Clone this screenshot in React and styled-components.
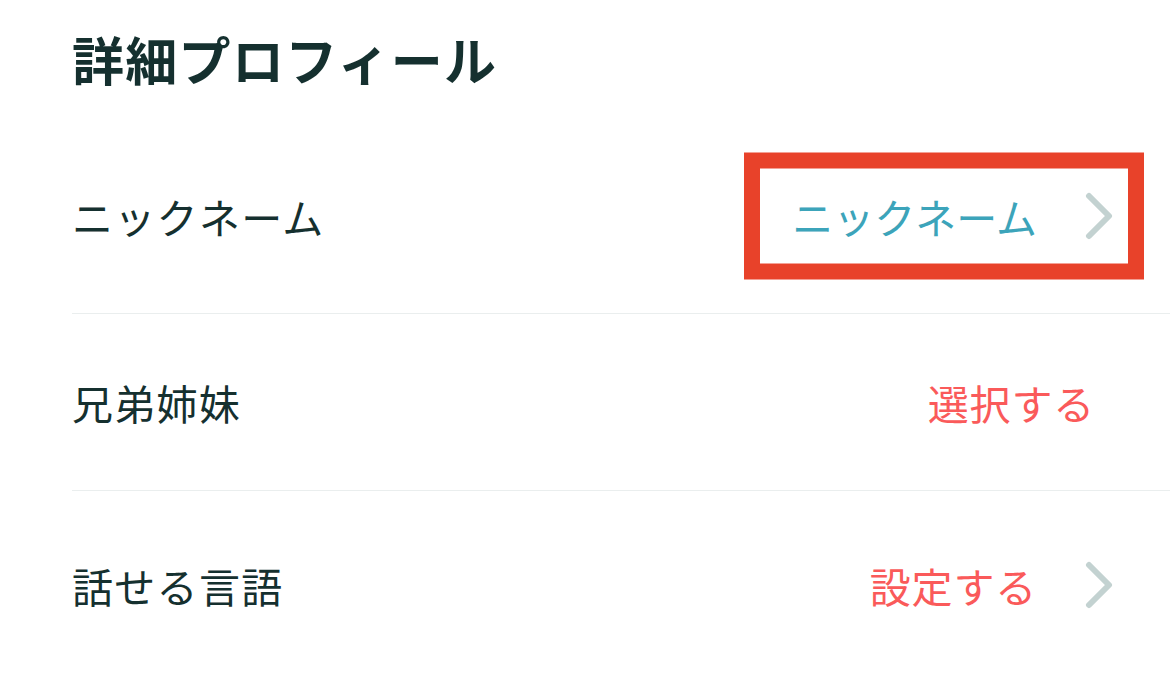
import styled, { createGlobalStyle } from "styled-components";

const COLORS = {
  text: "#15302f",
  value: "#3ca4ba",
  accent: "#fa5a5a",
  chevron: "#c3d2d1",
  divider: "#eaeeee",
  highlight: "#e8422a",
};

const ROWS = [
  { label: "ニックネーム", value: "ニックネーム", tone: "filled", chevron: true, highlight: true, height: 195 },
  { label: "兄弟姉妹", value: "選択する", tone: "empty", chevron: false, height: 177, endGap: 18 },
  { label: "話せる言語", value: "設定する", tone: "empty", chevron: true, height: 188, last: true },
];

export default function App() {
  return (
    <>
      <GlobalStyle />
      <Page>
        <Title>詳細プロフィール</Title>
        <List>
          {ROWS.map((row) => (
            <Row key={row.label} $height={row.height} $last={row.last}>
              <Label>{row.label}</Label>
              <ValueGroup $highlight={row.highlight} $endGap={row.endGap}>
                <Value $tone={row.tone}>{row.value}</Value>
                {row.chevron && <Chevron />}
              </ValueGroup>
            </Row>
          ))}
        </List>
      </Page>
    </>
  );
}

function Chevron() {
  return (
    <ChevronIcon viewBox="0 0 28 48" aria-hidden="true">
      <polyline points="4,4 24,24 4,44" />
    </ChevronIcon>
  );
}

const GlobalStyle = createGlobalStyle`
  html, body {
    margin: 0;
    background: #ffffff;
  }
  body {
    font-family: "Noto Sans CJK JP", "Noto Sans", sans-serif;
    color: ${COLORS.text};
  }
`;

const Page = styled.div`
  width: 1170px;
  height: 685px;
  overflow: hidden;
  background: #ffffff;
`;

const Title = styled.h1`
  margin: 0;
  padding: 33px 0 34px 72px;
  font-size: 52px;
  line-height: 52px;
  font-weight: 700;
  letter-spacing: 1.3px;
  color: ${COLORS.text};
`;

const List = styled.div`
  margin-left: 72px;
  display: flex;
  flex-direction: column;
`;

const Row = styled.div`
  box-sizing: border-box;
  height: ${(p) => p.$height}px;
  flex-shrink: 0;
  display: flex;
  align-items: center;
  justify-content: space-between;
  padding-right: 57px;
  border-bottom: ${(p) => (p.$last ? "none" : `1px solid ${COLORS.divider}`)};
`;

const Label = styled.span`
  font-size: 41px;
  line-height: 41px;
  font-weight: 400;
  letter-spacing: 1.3px;
  color: ${COLORS.text};
`;

const ValueGroup = styled.div`
  position: relative;
  display: flex;
  align-items: center;
  gap: 48px;
  margin-right: ${(p) => p.$endGap || 0}px;

  &::after {
    content: "";
    display: ${(p) => (p.$highlight ? "block" : "none")};
    position: absolute;
    left: -48px;
    right: -31px;
    top: 50%;
    height: 127px;
    transform: translateY(-50%);
    box-sizing: border-box;
    border: 16px solid ${COLORS.highlight};
  }
`;

const Value = styled.span`
  font-size: 41px;
  line-height: 41px;
  font-weight: 400;
  letter-spacing: ${(p) => (p.$tone === "filled" ? "0" : "0.8px")};
  color: ${(p) => (p.$tone === "filled" ? COLORS.value : COLORS.accent)};
`;

const ChevronIcon = styled.svg`
  width: 28px;
  height: 48px;
  flex-shrink: 0;

  polyline {
    fill: none;
    stroke: ${COLORS.chevron};
    stroke-width: 6;
    stroke-linecap: round;
    stroke-linejoin: round;
  }
`;
